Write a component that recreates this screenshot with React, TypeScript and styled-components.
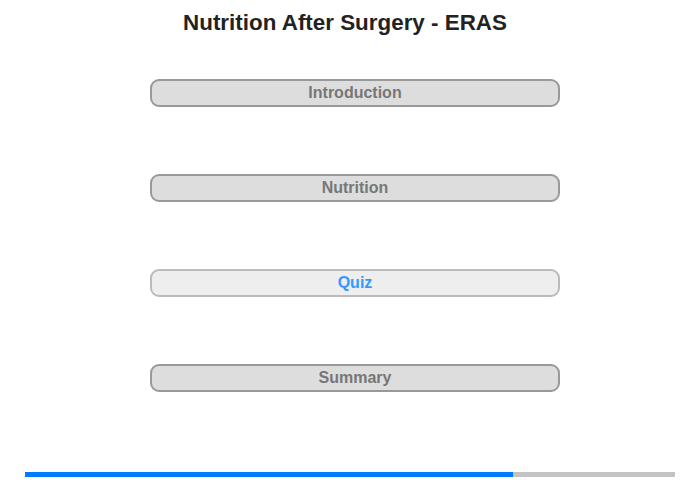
import React from "react";
import styled, { createGlobalStyle } from "styled-components";

const GlobalStyle = createGlobalStyle`
  body {
    margin: 0;
    background: #ffffff;
    font-family: "Liberation Sans", Arial, sans-serif;
  }
`;

const sections = [
  { label: "Introduction", active: false },
  { label: "Nutrition", active: false },
  { label: "Quiz", active: true },
  { label: "Summary", active: false },
];

const App: React.FC = () => {
  const progress = 75;

  return (
    <StyledView>
      <GlobalStyle />
      <Title>Nutrition After Surgery - ERAS</Title>
      <Menu>
        {sections.map((s) => (
          <MenuButton key={s.label} $active={s.active}>
            {s.label}
          </MenuButton>
        ))}
      </Menu>
      <ProgressTrack>
        <ProgressFill style={{ width: `${progress}%` }} />
      </ProgressTrack>
    </StyledView>
  );
};

const StyledView = styled.div`
  width: 700px;
  height: 480px;
  display: flex;
  flex-direction: column;
  box-sizing: border-box;
  padding-top: 10px;
`;

const Title = styled.h1`
  margin: 0 10px 0 0;
  font-size: 22.4px;
  line-height: 26px;
  font-weight: bold;
  color: #222222;
  text-align: center;
`;

const Menu = styled.div`
  display: flex;
  flex-direction: column;
  gap: 67px;
  margin: 43px 0 0 150px;
  width: 410px;
`;

const MenuButton = styled.div<{ $active: boolean }>`
  height: 28px;
  box-sizing: border-box;
  border: 2px solid ${(p) => (p.$active ? "#bbbbbb" : "#999999")};
  border-radius: 9px;
  background: ${(p) => (p.$active ? "#eeeeee" : "#dddddd")};
  color: ${(p) => (p.$active ? "#3399ff" : "#777777")};
  font-size: 16px;
  font-weight: bold;
  line-height: 24px;
  text-align: center;
`;

const ProgressTrack = styled.div`
  margin: auto 25px 3px 25px;
  height: 5px;
  background: #c3c3c3;
  display: flex;
`;

const ProgressFill = styled.div`
  height: 100%;
  background: #007bff;
`;

export default App;
